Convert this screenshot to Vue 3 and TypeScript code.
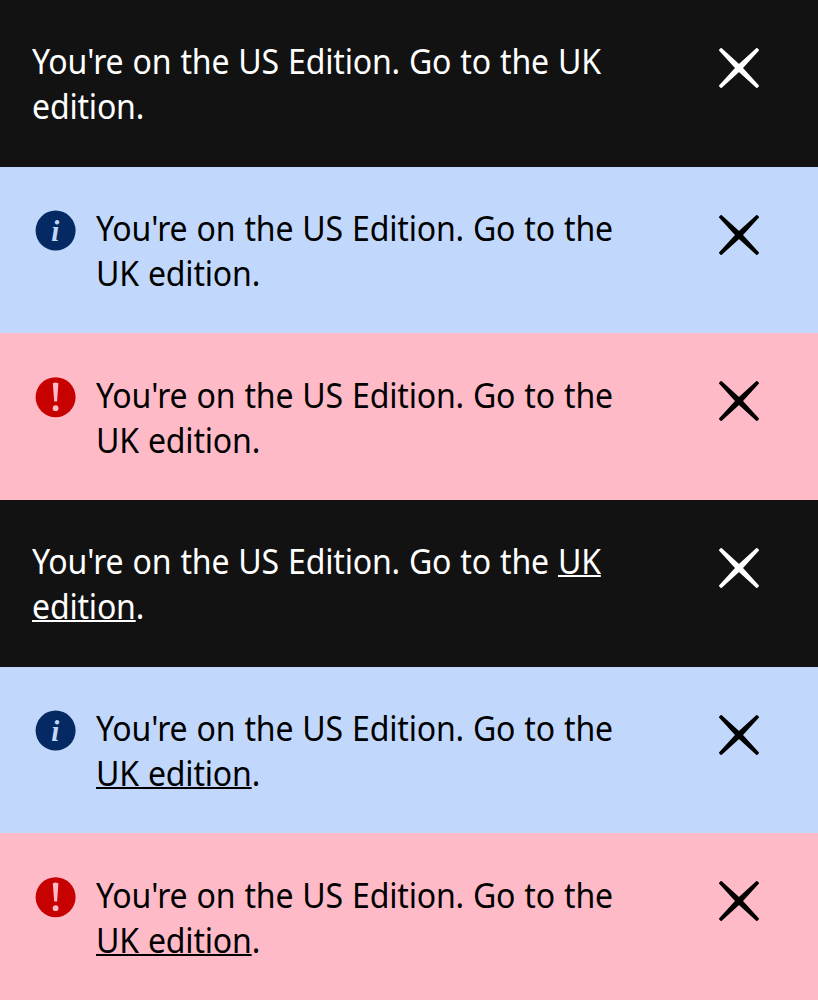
<script setup lang="ts">
type Tone = 'default' | 'info' | 'error'

interface Notice {
  tone: Tone
  linked: boolean
}

const notices: Notice[] = [
  { tone: 'default', linked: false },
  { tone: 'info', linked: false },
  { tone: 'error', linked: false },
  { tone: 'default', linked: true },
  { tone: 'info', linked: true },
  { tone: 'error', linked: true },
]
</script>

<template>
  <main class="stack">
    <section v-for="(notice, index) in notices" :key="index" class="banner" :class="notice.tone">
      <svg v-if="notice.tone === 'info'" class="status" viewBox="0 0 42 42" aria-hidden="true">
        <circle cx="20.6" cy="20.6" r="20" fill="#052962" />
        <text class="info-mark" x="16.2" y="30.6">i</text>
      </svg>
      <svg v-else-if="notice.tone === 'error'" class="status" viewBox="0 0 42 42" aria-hidden="true">
        <circle cx="20.6" cy="20.2" r="20" fill="#c70000" />
        <path d="M17.8 6.2 L20.5 5.4 L23.4 6.2 L22.1 24.4 H19.2 Z" fill="#ffbac8" />
        <circle cx="20.6" cy="31.2" r="2.9" fill="#ffbac8" />
      </svg>
      <p class="message">
        You're on the US Edition. Go to the
        <a v-if="notice.linked" href="#">UK edition</a><template v-else>UK edition</template>.
      </p>
      <button class="close" type="button" aria-label="Close">
        <svg viewBox="0 0 40 40" aria-hidden="true">
          <path
            d="M2.2 0.9 L20 17.1 L37.8 0.9 L39.1 2.2 L22.9 20 L39.1 37.8 L37.8 39.1 L20 22.9 L2.2 39.1 L0.9 37.8 L17.1 20 L0.9 2.2 Z"
            fill="currentColor"
            stroke="currentColor"
            stroke-width="1.8"
            stroke-linejoin="round"
          />
        </svg>
      </button>
    </section>
  </main>
</template>

<style>
body {
  margin: 0;
}
</style>

<style scoped>
.stack {
  display: grid;
  grid-template-rows: repeat(6, 1fr);
  height: 1000px;
}

.banner {
  display: flex;
  align-items: flex-start;
  box-sizing: border-box;
  padding: 38.3px 59px 0 32px;
  color: #000;
  font-family: 'Noto Sans', sans-serif;
}

.default {
  background: #121212;
  color: #fff;
}

.info {
  background: #c1d8fc;
}

.error {
  background: #ffbac8;
}

.status {
  flex: none;
  width: 42px;
  height: 42px;
  margin: 5.3px 19px 0 3px;
}

.info-mark {
  fill: #c1d8fc;
  font: italic bold 29px 'Liberation Serif', serif;
}

.message {
  flex: none;
  width: 620px;
  margin: 1px 0 0;
  font-size: 34px;
  line-height: 45px;
  letter-spacing: -0.2px;
  word-spacing: 1px;
  transform: scaleX(0.942);
  transform-origin: 0 0;
}

.info .message,
.error .message {
  width: 570px;
}

.message a {
  color: inherit;
  text-decoration: underline;
  text-decoration-thickness: 2px;
  text-underline-offset: 1px;
  text-decoration-skip-ink: none;
}

.close {
  flex: none;
  width: 40px;
  height: 40px;
  margin: 9.7px 0 0 auto;
  padding: 0;
  border: 0;
  background: none;
  color: inherit;
}

.close svg {
  display: block;
  width: 40px;
  height: 40px;
}
</style>
